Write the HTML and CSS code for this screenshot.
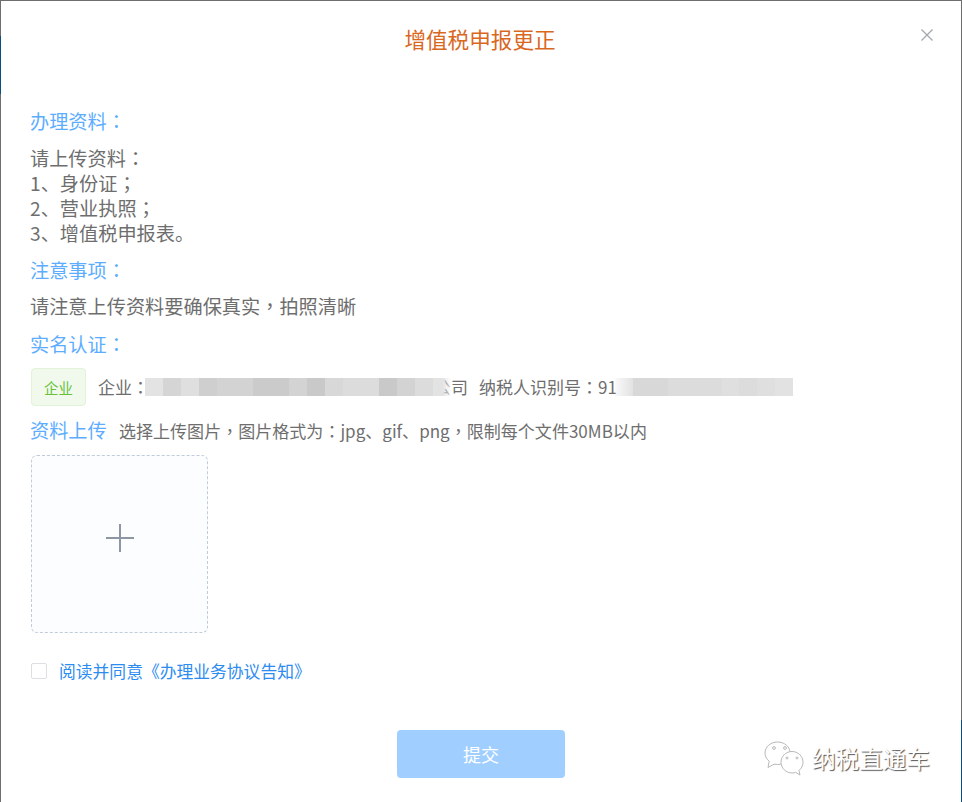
FILE: index.html
```html
<!DOCTYPE html>
<html lang="zh-CN">
<head>
<meta charset="utf-8">
<title>增值税申报更正</title>
<link rel="stylesheet" href="styles.css">
</head>
<body>
<div class="dialog">
  <header class="head">
    <h1 class="title">增值税申报更正</h1>
    <svg class="close" width="14" height="14" viewBox="0 0 14 14"><path d="M1.500 1.500l11 11M12.500 1.500l-11 11" stroke="#a3a7ae" stroke-width="1.300" fill="none"/></svg>
  </header>
  <main class="body">
    <h2 class="label first">办理资料<span class="p" lang="zh-TW">：</span></h2>
    <div class="text docs">
      <div>请上传资料<span class="p" lang="zh-TW">：</span></div>
      <div>1、身份证<span class="p" lang="zh-TW">；</span></div>
      <div>2、营业执照<span class="p" lang="zh-TW">；</span></div>
      <div>3、增值税申报表。</div>
    </div>
    <h2 class="label notes">注意事项<span class="p" lang="zh-TW">：</span></h2>
    <div class="text note">请注意上传资料要确保真实<span class="p" lang="zh-TW">，</span>拍照清晰</div>
    <h2 class="label auth">实名认证<span class="p" lang="zh-TW">：</span></h2>
    <div class="identity">
      <span class="tag">企业</span>
      <span class="id-text">企业<span class="p" lang="zh-TW">：</span></span>
      <span class="redact r1">
        <i class="s1"></i><i class="s2"></i><i class="s3"></i><i class="s4"></i><i class="s5"></i><i class="s5"></i><i class="s6"></i><i class="s6"></i><i class="s5"></i><i class="s7"></i><i class="s8"></i><i class="s9"></i><i class="s9"></i><i class="s7"></i><i class="s5"></i><i class="s9"></i><i class="s1 fade"></i>
      </span>
      <span class="id-text company">公司</span>
      <span class="id-text taxno">纳税人识别号<span class="p" lang="zh-TW">：</span>91</span>
      <span class="redact r2">
        <i class="s10 fade2"></i><i class="s8"></i><i class="s8"></i><i class="s9"></i><i class="s9"></i><i class="s9"></i><i class="s3"></i><i class="s9"></i><i class="s3"></i><i class="s10"></i>
      </span>
    </div>
    <div class="upload-head">
      <h2 class="label upload-label">资料上传</h2>
      <span class="hint">选择上传图片<span class="p" lang="zh-TW">，</span>图片格式为<span class="p" lang="zh-TW">：</span>jpg、gif、png<span class="p" lang="zh-TW">，</span>限制每个文件30MB以内</span>
    </div>
    <div class="uploader">
      <svg class="plus" width="30" height="30" viewBox="0 0 30 30"><path d="M1 15h28M15 1v28" stroke="#8f96a3" stroke-width="2" fill="none"/></svg>
    </div>
    <div class="agree">
      <span class="check"></span>
      <span class="link">阅读并同意《办理业务协议告知》</span>
    </div>
    <div class="actions"><button class="submit" type="button">提交</button></div>
  </main>
  <div class="mark">
    <svg width="41" height="36" viewBox="0 0 41 36" fill="#fff" stroke="#b8b8b8" stroke-width="1">
      <path d="M14.500 2C7.600 2 2 6.900 2 13c0 3.300 1.600 6.200 4.200 8.200L5 27.500l6-3.300c1.100.2 2.300.3 3.500.3 6.900 0 12.500-5 12.500-11.500S21.400 2 14.500 2z"/>
      <path d="M29 11.500c-6 0-11 4.800-11 10.700S23 33 29 33c1.300 0 2.500-.2 3.600-.6L37 35l-1-4.500c2.500-2 4-4.900 4-8.300 0-5.900-5-10.700-11-10.700z"/>
      <circle cx="11" cy="8" r="1.400" fill="none"/><circle cx="22" cy="8" r="1.400" fill="none"/>
      <circle cx="24" cy="18" r="1" fill="none"/><circle cx="34" cy="18" r="1" fill="none"/>
    </svg>
    <span class="mark-text">纳税直通车</span>
  </div>
</div>
</body>
</html>
```

FILE: styles.css
```css
* { box-sizing: border-box; }
html, body { margin: 0; padding: 0; height: 100%; }
body {
  width: 962px;
  height: 802px;
  overflow: hidden;
  padding: 1px 1px 0 1px;
  background:
    linear-gradient(#0b4f80, #0b4f80) 0 36px / 1px 58px no-repeat,
    linear-gradient(#0b4f80, #0b4f80) 961px 720px / 1px 82px no-repeat,
    #6e6e6e;
  font-family: "Noto Sans CJK SC", "Liberation Sans", sans-serif;
  color: #6e6e6e;
  text-spacing-trim: space-all;
}
.dialog { position: relative; width: 960px; height: 801px; background: #fff; }
.head { height: 78px; display: flex; justify-content: center; padding: 21px 2px 0 0; }
.title { margin: 0; font-size: 21.600px; line-height: 34px; font-weight: 400; color: #d9681f; }
.close { position: absolute; top: 27px; left: 919px; }
.body { padding: 0 29px; }
.p { font-family: "Noto Sans CJK TC", "Noto Sans CJK SC", sans-serif; }
.label { margin: 0; font-size: 19.200px; line-height: 26px; font-weight: 400; color: #5cadff; }
.first { margin-top: 29px; }
.text { font-size: 19.200px; line-height: 25px; color: #6e6e6e; }
.docs { margin-top: 12px; }
.notes { margin-top: 11px; }
.note { margin-top: 11px; }
.auth { margin-top: 12px; }
.identity { display: flex; align-items: center; margin-top: 10px; height: 40px; font-size: 17px; }
.tag {
  width: 55px; height: 38px; margin-left: 1px; display: flex; align-items: center; justify-content: center;
  background: #f0f9eb; border: 1px solid #e1f3d8; border-radius: 4px; color: #67c23a; font-size: 14.400px;
}
.id-text { line-height: 24px; color: #6e6e6e; white-space: nowrap; }
.tag + .id-text { margin-left: 12px; }
.redact { display: flex; height: 18px; flex: none; position: relative; z-index: 1; }
.redact i { display: block; width: 18px; height: 18px; }
.r1 { width: 306px; margin-right: -17px; margin-left: -4px; }
.r2 { width: 178px; margin-left: -2px; }
.s1 { background: #e3e3e3; }
.s2 { background: #d5d5d6; }
.s3 { background: #dfdfdf; }
.s4 { background: #cfcfd0; }
.s5 { background: #d3d3d3; }
.s6 { background: #cbcbcc; }
.s7 { background: #c9c9ca; }
.s8 { background: #d8d8d9; }
.s9 { background: #dcdcdc; }
.s10 { background: #e2e2e2; }
.fade { background: linear-gradient(90deg, #e3e3e3 55%, rgba(227,227,227,.5) 75%, rgba(255,255,255,.85)); }
.fade2 { background: linear-gradient(90deg, rgba(226,226,226,.2), #e2e2e2); }
.company { width: 33px; text-align: right; }
.taxno { margin-left: 12px; }
.upload-head { display: flex; align-items: baseline; margin-top: 10px; }
.upload-label { width: 89px; }
.hint { font-size: 17.040px; line-height: 26px; color: #6e6e6e; white-space: nowrap; }
.uploader {
  width: 177px; height: 178px; margin: 11px 0 0 1px; display: flex; align-items: center; justify-content: center;
  background: #fbfdff; border: 1px dashed #c0ccda; border-radius: 6px;
}
.plus { margin: 0 0 12px 0; }
.agree { display: flex; align-items: center; margin: 26px 0 0 1px; height: 24px; }
.check { width: 16px; height: 16px; border: 1px solid #dcdee2; border-radius: 2px; background: #fff; }
.link { margin-left: 12px; font-size: 16.800px; line-height: 24px; color: #2d8cf0; white-space: nowrap; }
.actions { display: flex; justify-content: center; margin-top: 47px; }
.submit {
  width: 168px; height: 48px; padding: 0; border: 0; border-radius: 4px;
  background: #a0cfff; color: #fff; font-family: inherit; font-size: 18px;
}
.mark { position: absolute; left: 762px; top: 735px; display: flex; align-items: center; height: 44px; }
.mark-text { margin-left: 8px; font-size: 23.600px; line-height: 32px; color: #fff; text-shadow: 1px 1px 1px #555; white-space: nowrap; }
```
